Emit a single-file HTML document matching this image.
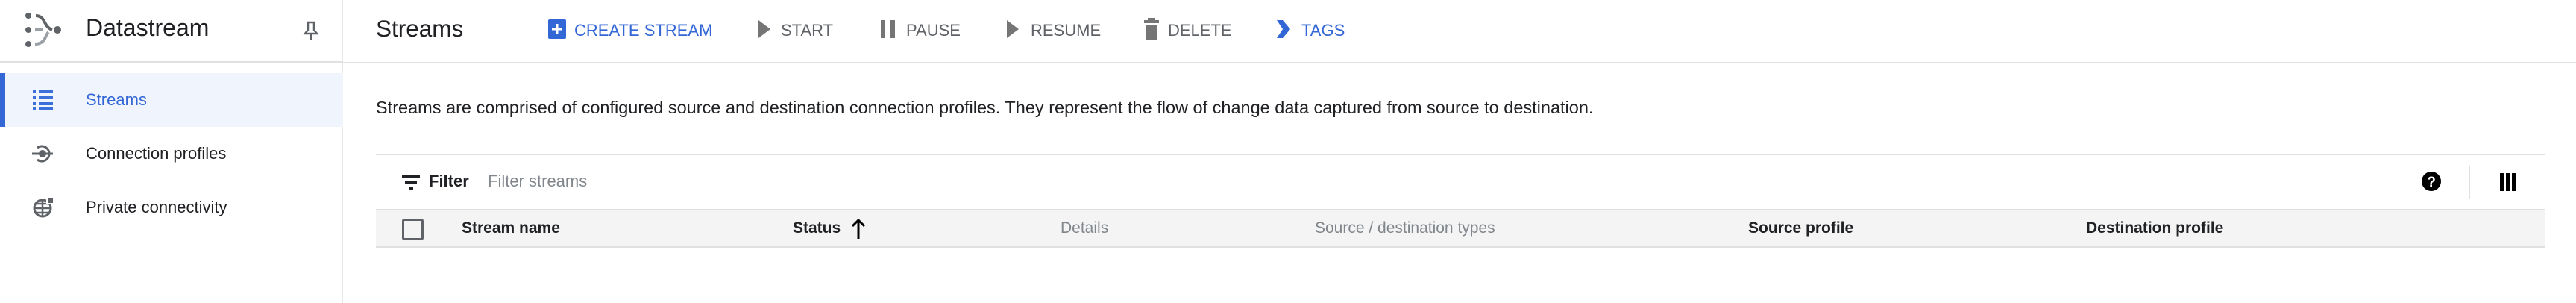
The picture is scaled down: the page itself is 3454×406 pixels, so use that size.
<!DOCTYPE html>
<html><head><meta charset="utf-8"><style>
*{margin:0;padding:0;box-sizing:border-box}
body{width:3454px;height:406px;background:#fff;font-family:"Liberation Sans",Arial,sans-serif;position:relative;overflow:hidden;color:#202124}
.a{position:absolute;white-space:nowrap}
.btn{font-size:22px;font-weight:500;letter-spacing:0;color:#5f6368;top:28px}
.hd{font-size:21px;font-weight:bold;top:294px;color:#202124}
.g{color:#80868b;font-weight:normal}
</style></head><body>
<!-- sidebar -->
<div class="a" style="left:0;top:0;width:460px;height:406px;border-right:2px solid #e8e8e8"></div>
<div class="a" style="left:0;top:82px;width:460px;height:2px;background:#e0e0e0"></div>
<svg class="a" style="left:30px;top:14px" width="56" height="50" viewBox="0 0 56 50">
<circle cx="8" cy="7" r="4" fill="#5f6368"/><circle cx="8" cy="26" r="4" fill="#5f6368"/><circle cx="8" cy="45" r="4" fill="#5f6368"/><circle cx="47" cy="26" r="5" fill="#5f6368"/>
<path d="M18 7 Q26 7 30 16 Q34 24 40 26" stroke="#5f6368" stroke-width="4" fill="none"/>
<path d="M17 26 H27" stroke="#9aa0a6" stroke-width="4"/>
<path d="M17 45 Q26 45 30 38 Q33 31 35 29" stroke="#9aa0a6" stroke-width="4" fill="none"/>
</svg>
<div class="a" style="left:115px;top:19px;font-size:32px;color:#202124">Datastream</div>
<svg class="a" style="left:404px;top:27px" width="26" height="28" viewBox="0 0 26 28"><path d="M7 3 H19 M9 3 V13 L5 18 H21 L17 13 V3 M13 18 V27" stroke="#5f6368" stroke-width="2.5" fill="none"/></svg>
<div class="a" style="left:0;top:98px;width:460px;height:72px;background:#eff4fd"></div>
<div class="a" style="left:0;top:98px;width:7px;height:72px;background:#3367d6"></div>
<svg class="a" style="left:44px;top:121px" width="27" height="27" viewBox="0 0 27 27" fill="#3b6fd9"><rect x="0" y="0" width="4" height="4"/><rect x="8" y="0" width="19" height="4"/><rect x="0" y="8" width="4" height="4"/><rect x="8" y="8" width="19" height="4"/><rect x="0" y="16" width="4" height="4"/><rect x="8" y="16" width="19" height="4"/><rect x="0" y="23" width="4" height="4"/><rect x="8" y="23" width="19" height="4"/></svg>
<div class="a" style="left:115px;top:121px;font-size:22px;color:#3367d6">Streams</div>
<svg class="a" style="left:42px;top:194px" width="30" height="24" viewBox="0 0 30 24"><path d="M1 12 H29" stroke="#5f6368" stroke-width="3"/><circle cx="15" cy="12" r="5" fill="#5f6368"/><path d="M8 4 A10 10 0 1 1 8 20" stroke="#5f6368" stroke-width="3" fill="none"/></svg>
<div class="a" style="left:115px;top:193px;font-size:22px">Connection profiles</div>
<svg class="a" style="left:44px;top:264px" width="28" height="28" viewBox="0 0 28 28"><circle cx="13" cy="15" r="11" stroke="#5f6368" stroke-width="3" fill="none"/><path d="M2 15 H24 M13 4 V26 M5 9 H21 M5 21 H21" stroke="#5f6368" stroke-width="2.5"/><rect x="18" y="0" width="10" height="10" fill="#fff"/><rect x="20" y="1" width="7" height="7" fill="#5f6368"/></svg>
<div class="a" style="left:115px;top:265px;font-size:22px">Private connectivity</div>
<!-- header -->
<div class="a" style="left:460px;top:83px;width:2994px;height:2px;background:#e0e0e0"></div>
<div class="a" style="left:504px;top:20px;font-size:31.5px">Streams</div>
<svg class="a" style="left:735px;top:26px" width="24" height="26"><rect width="24" height="26" rx="2" fill="#3367d6"/><path d="M12 6 V20 M5 13 H19" stroke="#fff" stroke-width="3"/></svg>
<div class="a btn" style="left:770px;color:#3367d6">CREATE STREAM</div>
<svg class="a" style="left:1017px;top:27px" width="16" height="24"><path d="M0 0 L16 12 L0 24Z" fill="#757575"/></svg>
<div class="a btn" style="left:1047px">START</div>
<svg class="a" style="left:1181px;top:27px" width="20" height="24"><rect width="6" height="24" fill="#757575"/><rect x="13" width="6" height="24" fill="#757575"/></svg>
<div class="a btn" style="left:1215px">PAUSE</div>
<svg class="a" style="left:1350px;top:27px" width="16" height="24"><path d="M0 0 L16 12 L0 24Z" fill="#757575"/></svg>
<div class="a btn" style="left:1382px">RESUME</div>
<svg class="a" style="left:1534px;top:24px" width="20" height="30"><rect x="5" y="0" width="10" height="3" fill="#757575"/><rect x="0" y="3" width="20" height="4" fill="#757575"/><rect x="2" y="9" width="16" height="21" rx="2" fill="#757575"/></svg>
<div class="a btn" style="left:1566px">DELETE</div>
<svg class="a" style="left:1712px;top:27px" width="18" height="24"><path d="M0 0 H8 L18 12 L8 24 H0 L8 12Z" fill="#3367d6"/></svg>
<div class="a btn" style="left:1745px;color:#3367d6">TAGS</div>
<!-- description -->
<div class="a" style="left:504px;top:131px;font-size:23.5px">Streams are comprised of configured source and destination connection profiles. They represent the flow of change data captured from source to destination.</div>
<div class="a" style="left:504px;top:206px;width:2909px;height:2px;background:#e0e0e0"></div>
<!-- filter row -->
<svg class="a" style="left:539px;top:235px" width="24" height="20"><rect x="0" y="0" width="24" height="4" fill="#202124"/><rect x="4" y="8" width="16" height="4" fill="#202124"/><rect x="9" y="16" width="6" height="4" fill="#202124"/></svg>
<div class="a" style="left:575px;top:230px;font-size:22px;font-weight:bold">Filter</div>
<div class="a" style="left:654px;top:230px;font-size:22px;color:#80868b">Filter streams</div>
<svg class="a" style="left:3247px;top:230px" width="26" height="26"><circle cx="13" cy="13" r="13" fill="#000"/><text x="13" y="20" font-size="19" font-weight="bold" text-anchor="middle" fill="#fff" font-family="Liberation Sans">?</text></svg>
<div class="a" style="left:3310px;top:222px;width:2px;height:44px;background:#e0e0e0"></div>
<svg class="a" style="left:3352px;top:232px" width="22" height="24"><rect x="0" width="6" height="24"/><rect x="8" width="6" height="24"/><rect x="16" width="6" height="24"/></svg>
<!-- table header -->
<div class="a" style="left:504px;top:280px;width:2909px;height:52px;background:#f4f4f4;border-top:2px solid #e0e0e0;border-bottom:2px solid #e0e0e0"></div>
<div class="a" style="left:539px;top:293px;width:29px;height:29px;border:3px solid #5f6368;border-radius:3px"></div>
<div class="a hd" style="left:619px">Stream name</div>
<div class="a hd" style="left:1063px">Status</div>
<svg class="a" style="left:1141px;top:292px" width="20" height="28"><path d="M10 28 V3 M2 11 L10 3 L18 11" stroke="#000" stroke-width="3" fill="none"/></svg>
<div class="a hd g" style="left:1422px">Details</div>
<div class="a hd g" style="left:1763px">Source / destination types</div>
<div class="a hd" style="left:2344px">Source profile</div>
<div class="a hd" style="left:2797px">Destination profile</div>
</body></html>
